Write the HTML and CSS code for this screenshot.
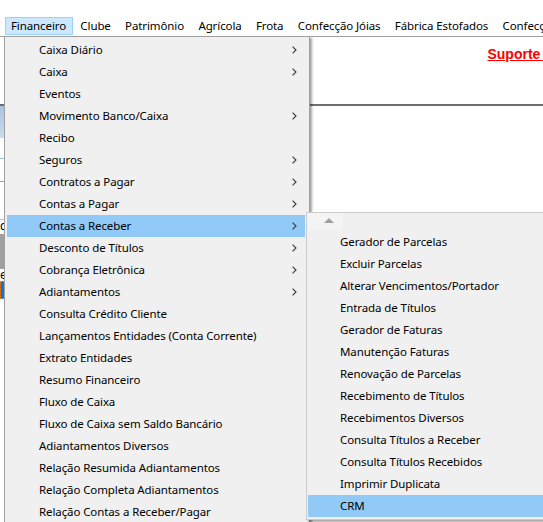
FILE: index.html
```html
<!DOCTYPE html>
<html lang="pt-BR">
<head>
<meta charset="utf-8">
<title>Financeiro</title>
<link rel="stylesheet" href="styles.css">
</head>
<body>
<div class="app">
  <div class="titlebar"></div>
  <nav class="menubar">
    <span class="mb-item active">Financeiro</span>
    <span class="mb-item">Clube</span>
    <span class="mb-item">Patrimônio</span>
    <span class="mb-item">Agrícola</span>
    <span class="mb-item">Frota</span>
    <span class="mb-item">Confecção Jóias</span>
    <span class="mb-item">Fábrica Estofados</span>
    <span class="mb-item">Confecção</span>
  </nav>
  <div class="workspace">
    <div class="top-panel">
      <a class="support" href="#">Suporte&nbsp;&nbsp;&nbsp;</a>
    </div>
    <div class="side">
      <div class="side-grad"></div>
      <div class="side-gap1"></div>
      <div class="side-line blue"></div>
      <div class="side-gap2"></div>
      <div class="side-line gray"></div>
      <div class="side-gap3"></div>
      <div class="side-text">d</div>
      <div class="side-block"></div>
      <div class="side-text">e</div>
      <div class="side-sel"></div>
    </div>
  </div>

  <div class="menu main-menu">
    <div class="mi"><span>Caixa Diário</span><svg class="arr" viewBox="0 0 5 8"><path d="M0.6 0.6 L4 4 L0.6 7.4"/></svg></div>
    <div class="mi"><span>Caixa</span><svg class="arr" viewBox="0 0 5 8"><path d="M0.6 0.6 L4 4 L0.6 7.4"/></svg></div>
    <div class="mi"><span>Eventos</span></div>
    <div class="mi"><span>Movimento Banco/Caixa</span><svg class="arr" viewBox="0 0 5 8"><path d="M0.6 0.6 L4 4 L0.6 7.4"/></svg></div>
    <div class="mi"><span>Recibo</span></div>
    <div class="mi"><span>Seguros</span><svg class="arr" viewBox="0 0 5 8"><path d="M0.6 0.6 L4 4 L0.6 7.4"/></svg></div>
    <div class="mi"><span>Contratos a Pagar</span><svg class="arr" viewBox="0 0 5 8"><path d="M0.6 0.6 L4 4 L0.6 7.4"/></svg></div>
    <div class="mi"><span>Contas a Pagar</span><svg class="arr" viewBox="0 0 5 8"><path d="M0.6 0.6 L4 4 L0.6 7.4"/></svg></div>
    <div class="mi hl"><span>Contas a Receber</span><svg class="arr" viewBox="0 0 5 8"><path d="M0.6 0.6 L4 4 L0.6 7.4"/></svg></div>
    <div class="mi"><span>Desconto de Títulos</span><svg class="arr" viewBox="0 0 5 8"><path d="M0.6 0.6 L4 4 L0.6 7.4"/></svg></div>
    <div class="mi"><span>Cobrança Eletrônica</span><svg class="arr" viewBox="0 0 5 8"><path d="M0.6 0.6 L4 4 L0.6 7.4"/></svg></div>
    <div class="mi"><span>Adiantamentos</span><svg class="arr" viewBox="0 0 5 8"><path d="M0.6 0.6 L4 4 L0.6 7.4"/></svg></div>
    <div class="mi"><span>Consulta Crédito Cliente</span></div>
    <div class="mi"><span>Lançamentos Entidades (Conta Corrente)</span></div>
    <div class="mi"><span>Extrato Entidades</span></div>
    <div class="mi"><span>Resumo Financeiro</span></div>
    <div class="mi"><span>Fluxo de Caixa</span></div>
    <div class="mi"><span>Fluxo de Caixa sem Saldo Bancário</span></div>
    <div class="mi"><span>Adiantamentos Diversos</span></div>
    <div class="mi"><span>Relação Resumida Adiantamentos</span></div>
    <div class="mi"><span>Relação Completa Adiantamentos</span></div>
    <div class="mi"><span>Relação Contas a Receber/Pagar</span></div>
  </div>

  <div class="menu sub-menu">
    <div class="scroll-up"><span class="up-box"><i class="tri"></i></span></div>
    <div class="mi"><span>Gerador de Parcelas</span></div>
    <div class="mi"><span>Excluir Parcelas</span></div>
    <div class="mi"><span>Alterar Vencimentos/Portador</span></div>
    <div class="mi"><span>Entrada de Títulos</span></div>
    <div class="mi"><span>Gerador de Faturas</span></div>
    <div class="mi"><span>Manutenção Faturas</span></div>
    <div class="mi"><span>Renovação de Parcelas</span></div>
    <div class="mi"><span>Recebimento de Títulos</span></div>
    <div class="mi"><span>Recebimentos Diversos</span></div>
    <div class="mi"><span>Consulta Títulos a Receber</span></div>
    <div class="mi"><span>Consulta Títulos Recebidos</span></div>
    <div class="mi"><span>Imprimir Duplicata</span></div>
    <div class="mi hl"><span>CRM</span></div>
  </div>
</div>
</body>
</html>
```

FILE: styles.css
```css
* { box-sizing: border-box; }
html, body {
  margin: 0;
  padding: 0;
  width: 543px;
  height: 522px;
  overflow: hidden;
  background: #ffffff;
}
body {
  font-family: "Noto Sans", "Liberation Sans", sans-serif;
  font-size: 11.5px;
  letter-spacing: -0.1px;
  color: #000;
}
.app {
  position: relative;
  width: 543px;
  height: 522px;
  overflow: hidden;
}
.titlebar { height: 16px; }

.menubar {
  display: flex;
  height: 21px;
  padding-left: 5px;
  padding-top: 1px;
  border-bottom: 1px solid #a0a0a0;
  white-space: nowrap;
}
.mb-item {
  display: flex;
  align-items: center;
  height: 18px;
  padding: 0 6px 1px 5px;
  margin-right: 1.3px;
  border: 1px solid transparent;
  flex: none;
}
.mb-item.active {
  background: #cce8ff;
  border-color: #99d1ff;
}

.workspace {
  display: flex;
  flex-direction: column;
}
.top-panel {
  height: 69px;
  border-bottom: 2px solid #6e6e6e;
  display: flex;
  justify-content: flex-end;
  align-items: flex-start;
  padding-top: 9px;
  white-space: nowrap;
}
.support {
  font-family: "Liberation Sans", Arial, sans-serif;
  font-weight: bold;
  font-size: 14px;
  letter-spacing: 0;
  color: #ff0000;
  text-decoration: underline;
  margin-right: -9px;
}
.side {
  width: 120px;
  display: flex;
  flex-direction: column;
}
.side-grad { height: 32px; background: linear-gradient(#a9c3df, #cadcef); }
.side-gap1 { height: 20px; }
.side-line { height: 1px; }
.side-line.blue { background: #9cc1e4; }
.side-line.gray { background: #a0a0a0; }
.side-gap2 { height: 22px; }
.side-gap3 { height: 38px; border-bottom: 1px solid #c8c8c8; }
.side-text { height: 12px; line-height: 12px; font-size: 12px; }
.side-block { height: 35px; background: #a0a0a0; margin-top: 2px; }
.side-sel { height: 18px; background: #0a78d7; border: 1px dotted #e8862a; }

.menu {
  position: absolute;
  background: #f0f0f0;
  border: 1px solid #a0a0a0;
  box-shadow: 2px 2px 2px rgba(0, 0, 0, 0.35);
  white-space: nowrap;
}
.main-menu {
  left: 4px;
  top: 36px;
  width: 306px;
  padding: 2px 4px 2px 2px;
}
.sub-menu {
  left: 306px;
  top: 212px;
  width: 260px;
  padding: 0 2px 2px 1px;
  border-color: #cccccc;
}
.mi {
  display: flex;
  align-items: center;
  height: 22px;
  padding-left: 32px;
  padding-right: 8px;
  padding-bottom: 1px;
}
.mi span { flex: 1; }
.mi.hl { background: #91c9f7; }
.arr {
  width: 5px;
  height: 8px;
  flex: none;
}
.arr path {
  fill: none;
  stroke: #3a3a3a;
  stroke-width: 1.1;
}
.scroll-up {
  height: 18px;
  display: flex;
}
.up-box {
  width: 34px;
  height: 17px;
  background: #f4f4f4;
  display: flex;
  align-items: center;
  justify-content: center;
}
.tri {
  width: 0;
  height: 0;
  border-left: 5px solid transparent;
  border-right: 5px solid transparent;
  border-bottom: 5px solid #a0a0a0;
  margin-left: 8px;
  margin-top: -2px;
}
```
